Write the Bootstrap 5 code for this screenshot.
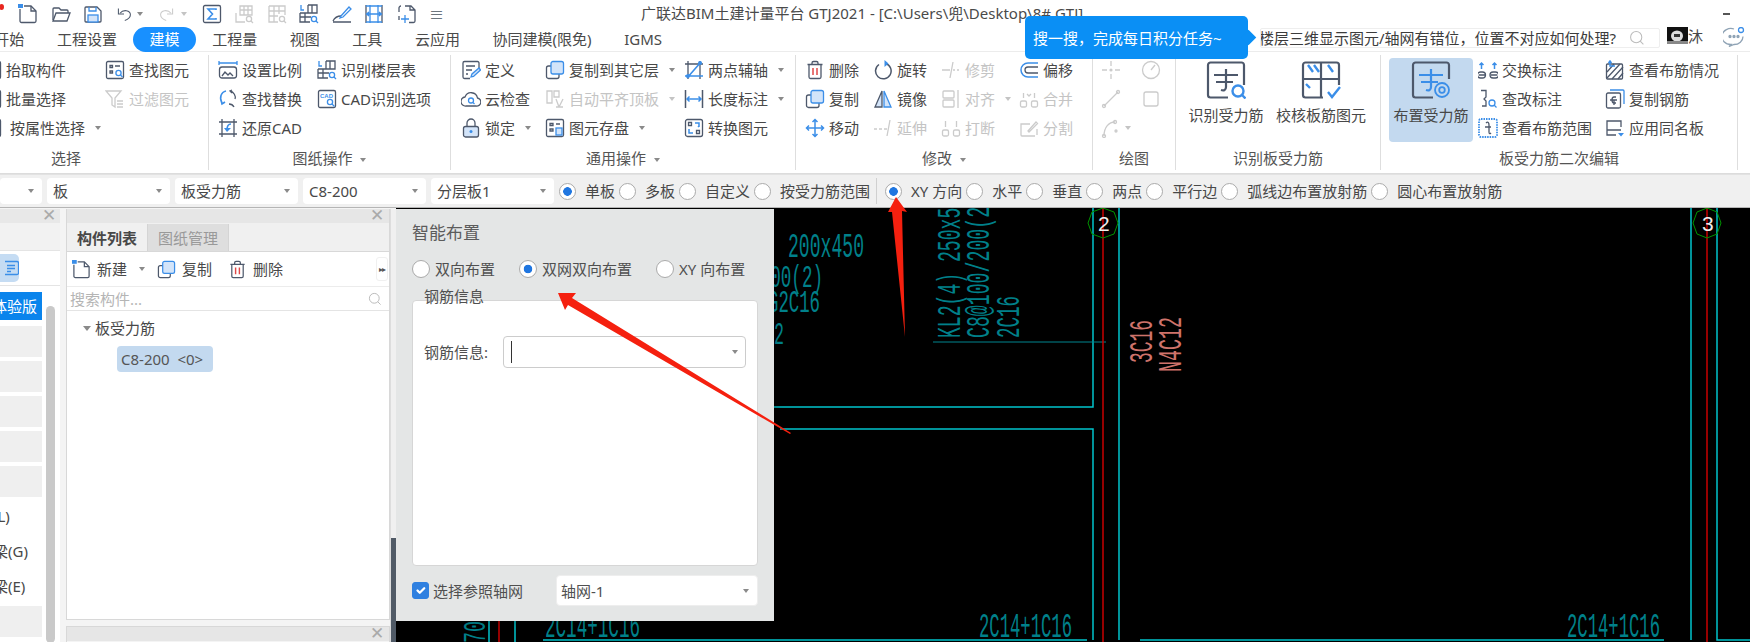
<!doctype html>
<html lang="zh-CN">
<head>
<meta charset="utf-8">
<title>GTJ2021</title>
<link rel="stylesheet" href="https://cdn.jsdelivr.net/npm/bootstrap@5.3.0/dist/css/bootstrap.min.css">
<style>
html,body{margin:0;height:642px;overflow:hidden}
body{width:1750px;position:relative;background:#fff;font-family:"Noto Sans","Noto Sans CJK SC",sans-serif;font-size:15px;line-height:1.2;color:#484848}
.ic{width:20px;height:20px;flex:none;fill:none;stroke:currentColor;stroke-width:1.3;color:#4d586b;--a:#3b8ee8;--f:#d3e4f9;overflow:hidden}
.ic.off{color:#cbcbcb;--a:#cbcbcb;--f:#f2f2f2}
.sa{stroke:var(--a)}.fla{fill:var(--a);stroke:none}.flf{fill:var(--f)}.wf{fill:#fff}
.crt{display:inline-block;flex:none;width:0;height:0;border:3.5px solid transparent;border-top:4px solid #8a8a8a;border-bottom:0}
.off-t{color:#c4c4c4}
/* title */
.ttl-bar{height:27px;padding-left:18px}
.qa{margin-right:12.500px}.qa-u{margin-right:5px;width:16px}.qa-c{margin-right:16px}.qa-r{margin-right:6px;width:16px}.qa-c2{margin-right:15px}
.ttl-txt{margin-left:197px;margin-bottom:2px;white-space:nowrap;color:#4a4a4a}
.red-dot{position:absolute;left:-1px;top:4px;width:5px;height:6px;border-radius:50%;background:#e8261f}
.min-d{width:7px;height:2px;background:#555;margin-right:20px}
/* tabs */
.tab-bar{height:24px;border-bottom:1px solid #ececec;box-sizing:content-box}
.tab-nav{margin-left:-22px;flex-wrap:nowrap}
.tab-nav .nav-link{height:25px;padding:0 16.300px;color:#4a4a4a;font-size:15px;line-height:24px;border-radius:13px;white-space:nowrap}
.tab-nav .nav-link.active{background:#1890ff;color:#fff}
.srch{width:400px;height:20px;margin-top:1px;border:1px solid #eee;border-radius:2px;overflow:hidden;color:#3c3c3c;white-space:nowrap;background:#fff}
.srch span{margin-left:-2px;flex:none;width:378px}
.srch .ic{margin-left:-8px;width:16px;height:16px;color:#bbb}
.usr{margin-left:7px;width:21px;height:17px}
.usr-n{width:20px;margin-right:15px}
.chat{width:22px;height:20px;margin-right:5px;color:#8fa3b5}
/* ribbon */
.ribbon{height:122px;border-bottom:1px solid #dcdcdc;overflow:hidden}
.rb-g{margin-top:3px;height:115px;border-right:1px solid #dedede;flex:none}
.rb-l{margin-top:auto;height:21px;color:#555;white-space:nowrap}
.rb-cols{display:grid;grid-auto-flow:column;grid-template-rows:repeat(3,28.7px);margin-top:1px}
.rb-i{white-space:nowrap;gap:4px}
.rb-i .crt{margin-left:6px}
.g1{width:209px}.g1 .rb-cols{margin-left:-18px;grid-template-columns:123px auto}.g1 .rb-l{padding-right:76px}
.g2{width:242px}.g2 .rb-cols{margin-left:9px;grid-template-columns:99px auto}
.g3{width:345px}.g3 .rb-cols{margin-left:10px;grid-template-columns:84px 139px auto}
.g4{width:297px}.g4 .rb-cols{margin-left:9px;grid-template-columns:68px 68px 78px auto}
.g5{width:83px}.g5 .rb-cols{margin-left:8px;grid-template-columns:40px auto}
.g6{width:205px}.g7{width:357px}
.g7 .rb-cols{margin-left:5px;grid-template-columns:127px auto}
.big-b{height:84px;margin-top:3px;padding-top:3px;white-space:nowrap;border-radius:4px;flex:none}
.big-b .ic{width:40px;height:38px;margin-bottom:7px}
.big-1{width:76px;margin-left:12px}.big-2{width:90px;margin-left:12px}
.big-3{width:84px;margin-left:8px;background:#c3d9ef}
/* options */
.opt-bar{height:34px;background:#f0f0f0;border-top:1px solid #e2e2e2;border-bottom:1px solid #b5b5b5;white-space:nowrap}
.opt-sel{height:26px;width:123px;margin-left:5px;padding:0 6px;background:#fff;border-radius:4px;flex:none}
.opt-sel .crt{margin-left:auto;margin-right:2px}
.opt-s0{width:42px;margin-left:0}
.opt-s1{margin-right:5px}
.opt-bar .form-check-input{margin:0 9px 0 0}
.opt-bar span+.form-check-input{margin-left:4px}
.form-check-input[type=radio]{width:17px;height:17px;flex:none;background-color:#fff;border:1px solid #aaa;background-image:none}
.form-check-input[type=radio]:checked{background-color:#fff;border-color:#aaa;background-image:radial-gradient(circle,#1f76e0 0 4px,transparent 4.600px)}
.opt-sep{width:1px;height:26px;background:#d0d0d0;margin:0 8px 0 6px}
/* main */
.main{height:435px;background:#f4f4f4;overflow:hidden}
.dk1{width:60px;flex:none;background:#fff;margin-top:1px;overflow:hidden}
.dk-x{color:#aaa;font-size:17px;line-height:14px;font-family:"Liberation Sans",sans-serif}
.dk1-hs{height:14px;background:#e8e8e8;padding-right:4px}
.dk1-h{height:28px;background:#f2f2f2;border-bottom:1px solid #e4e4e4}
.dk1-t{height:35px;border-bottom:1px solid #e4e4e4;padding-top:3px}
.dk1-b{width:19px;height:28px;background:#c5dcf3;border-radius:0 5px 5px 0}
.dk1-b svg{width:14px;height:16px;stroke:#3b8ee8;fill:none;stroke-width:1.300}
.dk1-l{padding-top:6px;gap:4px;width:42px;overflow:hidden}
.lst-r{height:31px;background:#efefef;flex:none;width:42px}
.lst-t{height:31px;flex:none;line-height:31px;padding-left:0;margin-left:-7px;white-space:nowrap}
.lst-a{height:28px;background:#0a84ec;color:#fff;line-height:28px;white-space:nowrap;text-indent:-8px;margin-bottom:2px;flex:none}
.sb{width:9px;background:#c9c9c9;border-radius:5px;margin:20px 0 0 4px}
.dk2{width:324px;flex:none;margin-left:6px;margin-top:1px}
.dk2-p{height:411px;background:#fff;border:1px solid #d8d8d8;border-top:0;flex:none}
.dk2-h{height:14px;background:#e6e6e6;padding-right:5px;flex:none}
.dk2-tb{height:29px;background:#f0f0f0;border-bottom:1px solid #d8d8d8;flex:none;padding-top:1px}
.tb-a,.tb-b{width:81px;font-weight:700;color:#484848;border-right:1px solid #d4d4d4}
.tb-b{font-weight:400;color:#999;background:#dedede;margin-bottom:0}
.dk2-tl{height:35px;padding-left:5px;border-bottom:1px solid #ececec;flex:none}
.dk2-tl .ic{width:19px;height:19px}
.tl-t{margin-left:6px}
.tl-m{margin-left:12px;margin-right:12px}
.tl-g{margin-right:16px}
.more{width:12px;height:24px;margin-left:auto;margin-right:1px;border:1px solid #f0f0f0;border-radius:3px;font-size:8px;letter-spacing:-1px;color:#555}
.dk2-s{height:24px;padding:0 3px;color:#b5b5b5;border-bottom:1px solid #e4e4e4;flex:none}
.dk2-s .ic{width:14px;height:14px;margin-left:auto;margin-right:4px;color:#b5b5b5}
.tr-1{margin:6px 0 0 16px;height:22px}
.tr-1 .crt{margin-right:4px;border-width:4px;border-top-width:5px}
.tr-2{margin:7px 0 0 50px;width:96px;height:26px;background:#c3d9ef;border-radius:4px;padding-left:4px;color:#555;white-space:nowrap}
.dk3{margin-top:6px;height:40px;border:1px solid #d8d8d8;flex:none}
.splt{width:6px;flex:none;background:#f0f0f0;border-left:1px solid #ddd;margin-top:1px}
.splt-d{margin-top:auto;height:105px;background:#505a66}
.cnv{flex:1 1 auto;background:#000;position:relative;overflow:hidden}
.cnv svg{display:block;width:1354px;height:435px}
.cnv text{font-family:"Liberation Mono",monospace;stroke:none}
.t1{fill:#00808a}.t2{fill:#cf736b}.t3{fill:#eee;font-family:"Liberation Sans",sans-serif !important}
/* floating */
.tip{position:absolute;left:1025px;top:16px;width:223px;height:43px;padding-left:8px;background:#0a8ff5;color:#fff;border-radius:5px;white-space:nowrap;z-index:5}
.tip::after{content:"";position:absolute;right:-6px;top:16px;width:11px;height:11px;background:#0a8ff5;transform:rotate(45deg)}
.dlg{position:absolute;left:0;top:1px;width:378px;height:412px;padding:12px 16px 0;background:#e4e6e6;box-shadow:0 0 8px rgba(0,0,0,.25);z-index:3;color:#505050}
.dlg-ttl{font-size:17px;height:24px;line-height:24px;color:#5c5c5c}
.dlg-r{margin-top:12px;height:24px;white-space:nowrap}
.dlg-r .form-check-input{width:18px;height:18px;margin:0 5px 0 0}
.dlg-r span{margin-right:24px}
.dlg-box{margin-top:19px;height:266px;background:#fff;border:1px solid #d6d6d6;border-radius:4px;padding:0 11px}
.dlg-lg{margin-top:-16px;height:22px;line-height:22px}
.dlg-f{margin-top:29px;white-space:nowrap}
.dlg-sel{height:32px;border:1px solid #ccc;border-radius:4px;background:#fff;padding:0 7px;flex:none}
.dlg-sel .crt{margin-left:auto}
.dlg-s1{width:243px;margin-left:auto}
.dlg-s2{width:202px;height:31px;margin-left:auto;border-color:#eee;padding:0 4px}
.dlg-b{margin-top:9px;height:31px}
.dlg-b .form-check-input{width:17px;height:17px;margin:0 4px 0 0;background-color:#2f80e0;border-color:#2f80e0;border-radius:3px}
.caret-l{width:1px;height:22px;background:#333;margin-right:0}
.arrows{position:absolute;left:0;top:0;width:1750px;height:642px;z-index:6;pointer-events:none}
</style>
</head>
<body>
<svg width="0" height="0" class="position-absolute">
<defs>
<symbol id="new" viewBox="0 0 20 20"><path d="M6 2h7l5 5v10a1.500 1.500 0 0 1-1.500 1.500h-13A1.500 1.500 0 0 1 2 17V5"/><path d="M13 2v5h5"/><rect class="fla" x="0" y="0" width="5" height="4"/></symbol>
<symbol id="open" viewBox="0 0 20 20"><path d="M2 16V5a1 1 0 0 1 1-1h5l2 2h6a1 1 0 0 1 1 1v2"/><path d="M2 17l3-8h14l-3 8z"/></symbol>
<symbol id="save" viewBox="0 0 20 20"><path d="M3 3h11l4 4v10a1 1 0 0 1-1 1H3a1 1 0 0 1-1-1V4a1 1 0 0 1 1-1z"/><path class="sa" d="M6 3v4h7V3"/><rect class="sa flf" x="5" y="11" width="10" height="7"/></symbol>
<symbol id="undo" viewBox="0 0 20 20"><path d="M5 9c4-5 13-4 13 2 0 4-4 6-7 7"/><path d="M3 3v7h7"/></symbol>
<symbol id="redo" viewBox="0 0 20 20"><path d="M15 9c-4-5-13-4-13 2 0 4 4 6 7 7"/><path d="M17 3v7h-7"/></symbol>
<symbol id="sig" viewBox="0 0 20 20"><rect x="1.500" y="1.500" width="17" height="17" rx="1.500"/><path class="sa" stroke-width="1.600" d="M14 6V5H6l4.500 5L6 15h8v-1"/></symbol>
<symbol id="tmag" viewBox="0 0 20 20"><path d="M6 2h12v9H6zM10 2v9M14 2v9M6 6h12M2 9v9h9"/><circle cx="15" cy="15" r="2.600"/><path d="M17 17l2 2"/></symbol>
<symbol id="gmag" viewBox="0 0 20 20"><path d="M2 2h16v9M2 2v16h9M7 2v16M12 2v8M2 7h16M2 12h9"/><circle cx="15" cy="15" r="2.600"/><path d="M17 17l2 2"/></symbol>
<symbol id="flr" viewBox="0 0 20 20"><path class="sa" d="M2 1v5h3"/><path d="M9 1h9v8H1M9 1v8M13 1v8M1 9v9h10M6 9v9M1 13h11"/><circle class="sa" cx="15" cy="15" r="2.600"/><path class="sa" d="M17 17l2 2"/></symbol>
<symbol id="pen" viewBox="0 0 20 20"><path d="M1 17c2-4 5-5 8-5M1 18h18"/><path class="sa" d="M9 12l8-9 2 2-8 8-3 1z"/></symbol>
<symbol id="frm" viewBox="0 0 20 20"><path d="M2 1v18M18 1v18"/><path class="sa" stroke-width="1.600" d="M2 2h16M2 18h16M2 10h16M5 8l-2 2 2 2M15 8l2 2-2 2"/><path class="sa" d="M6 1v18M14 1v18"/></symbol>
<symbol id="scan" viewBox="0 0 20 20"><path d="M8 2h6l4 4v11a1.500 1.500 0 0 1-1.500 1.500H12M2 8v-4a2 2 0 0 1 2-2M2 12v4M13 2v4h5"/><path class="sa" d="M8 11v8M4 15h8"/></symbol>
<symbol id="find" viewBox="0 0 20 20"><rect x="1.500" y="1.500" width="17" height="17" rx="1.500"/><path d="M5 5.500h2.500v2H5zM10 6h5M5 11h2.500v2H5z"/><circle class="sa" cx="13.500" cy="13" r="2.600"/><path class="sa" d="M15.500 15l2 2"/></symbol>
<symbol id="filt" viewBox="0 0 20 20"><path d="M1 2h15l-6 7v9l-3-2V9z"/><path d="M12 12h6M12 15h6M12 18h6"/></symbol>
<symbol id="rat" viewBox="0 0 20 20"><path class="sa" d="M1 1v4M19 1v4M1 3h18"/><rect x="1.500" y="7" width="17" height="11" rx="2.500"/><path d="M4 16l3-4 3 3 2-2 3 3"/></symbol>
<symbol id="rep" viewBox="0 0 20 20"><path class="sa" stroke-width="1.600" d="M8 2C3 3 1 9 4 14M3 11l1 4 3-2"/><path d="M12 2c4 1 6 5 5 8M16 18c-1-2-3-3-5-3M14 4l-2-2 2-1"/></symbol>
<symbol id="cad" viewBox="0 0 20 20"><rect x="1.500" y="1.500" width="17" height="17" rx="1.500"/><text x="3" y="8.500" font-size="6" font-weight="700" stroke="none" fill="#3b8ee8" font-family="Liberation Sans">CAD</text><circle class="sa" cx="13" cy="13" r="2.600"/><path class="sa" d="M15 15l2.500 2.500"/></symbol>
<symbol id="rest" viewBox="0 0 20 20"><path d="M1 4h18M1 16h18M4 1v18M16 1v18"/><path class="sa" stroke-width="1.600" d="M13 6c-3 0-4 3-4 6"/><path class="fla" d="M9 14l-3-4h7z"/></symbol>
<symbol id="def" viewBox="0 0 20 20"><path d="M18 8V3a1.500 1.500 0 0 0-1.500-1.500h-13A1.500 1.500 0 0 0 2 3v14a1.500 1.500 0 0 0 1.500 1.500H9M5 6h9M5 10h6M5 14h2"/><path class="sa flf" d="M10 17l1-3 7-6 1.500 2-7 6.500z"/></symbol>
<symbol id="cld" viewBox="0 0 20 20"><path d="M5 17a4.500 4.500 0 0 1-1-9 6.500 6.500 0 0 1 12.500 1 4 4 0 0 1-1.500 8z"/><circle class="sa" cx="10" cy="11.500" r="2.500"/><path class="sa" d="M12 13.500l1.500 1.500"/></symbol>
<symbol id="lck" viewBox="0 0 20 20"><rect class="flf" x="2.500" y="8.500" width="15" height="10.500" rx="2"/><path d="M6 8.500V5a4 4 0 0 1 8 0v3.500"/><circle class="fla" cx="10" cy="13.500" r="1.500"/></symbol>
<symbol id="cpy" viewBox="0 0 20 20"><rect x="1.500" y="6" width="12.500" height="12.500" rx="2"/><rect class="sa flf" x="6" y="1.500" width="12.500" height="12.500" rx="2"/></symbol>
<symbol id="atop" viewBox="0 0 20 20"><path d="M2 2h5v12H2zM9 2h5v6H9zM14 18l-3-8M14 18l4-8M11 18h7"/></symbol>
<symbol id="sto" viewBox="0 0 20 20"><rect x="1.500" y="1.500" width="17" height="17" rx="1.500"/><path d="M5 5.500h3v2H5zM11 6h4M5 11h3v2H5z"/><rect class="sa flf" x="11" y="10" width="6" height="7"/></symbol>
<symbol id="two" viewBox="0 0 20 20"><path d="M4 1v18M16 1v18M1 4h18"/><path class="sa" stroke-width="1.600" d="M3 18L17 2M1 16h18"/><circle class="fla" cx="4" cy="16" r="2"/><circle class="fla" cx="16" cy="3" r="2"/></symbol>
<symbol id="dim" viewBox="0 0 20 20"><path stroke-width="1.500" d="M1.500 1v18M18.500 1v18"/><path class="sa" stroke-width="1.500" d="M3 10h14M5.500 7.500L3 10l2.500 2.500M14.500 7.500L17 10l-2.500 2.500"/></symbol>
<symbol id="cvt" viewBox="0 0 20 20"><rect x="1.500" y="1.500" width="17" height="17" rx="2"/><path d="M4.500 4.500h3v3h-3zM12.500 12.500h3v3h-3z"/><path class="sa" stroke-width="1.500" d="M11 5h4v4M14 9l1-1M9 15H5v-4"/></symbol>
<symbol id="del" viewBox="0 0 20 20"><path d="M4 5v12a1.500 1.500 0 0 0 1.500 1.500h9A1.500 1.500 0 0 0 16 17V5M2.500 4.500h15M7 4.500V3a1.500 1.500 0 0 1 1.500-1.500h3A1.500 1.500 0 0 1 13 3v1.500"/><path stroke="#e04848" stroke-width="1.500" d="M8 8v7M12 8v7"/></symbol>
<symbol id="rot" viewBox="0 0 20 20"><path stroke-width="1.500" d="M12.500 3.500a7.800 7.800 0 1 1-6.500 1"/><path class="fla" d="M11.500 0v7l4-3.500z"/></symbol>
<symbol id="trm" viewBox="0 0 20 20"><path d="M1 10h8M12 10h2M16 10h2M12 2l-3 16"/></symbol>
<symbol id="ofs" viewBox="0 0 20 20"><path class="sa" stroke-width="1.500" d="M19 3H9a7 7 0 0 0 0 14h10"/><path d="M19 7H9a3 3 0 0 0 0 6h10"/></symbol>
<symbol id="mir" viewBox="0 0 20 20"><path class="flf" d="M9 2L2 18h7z"/><path class="sa flf" d="M11 2l7 16h-7z"/></symbol>
<symbol id="aln" viewBox="0 0 20 20"><rect x="2" y="2" width="11" height="7" rx="1"/><rect x="2" y="11" width="11" height="7" rx="1"/><path d="M17 1v18"/></symbol>
<symbol id="mrg" viewBox="0 0 20 20"><rect x="1.500" y="12" width="6" height="6" rx="1.500"/><rect x="12.500" y="12" width="6" height="6" rx="1.500"/><path d="M4.500 4v5M15.500 4v5M8 5l2 2 2-2"/></symbol>
<symbol id="mov" viewBox="0 0 20 20"><path class="sa" stroke-width="1.500" d="M10 2v16M2 10h16M7.500 4L10 1.500 12.500 4M7.500 16l2.500 2.500 2.500-2.500M4 7.500L1.500 10 4 12.500M16 7.500l2.500 2.500-2.500 2.500"/></symbol>
<symbol id="ext" viewBox="0 0 20 20"><path d="M1 11h3M6 11h3M11 11h3M17 2l-3 16"/></symbol>
<symbol id="brk" viewBox="0 0 20 20"><rect x="1.500" y="12" width="6" height="6" rx="1.500"/><rect x="12.500" y="12" width="6" height="6" rx="1.500"/><path d="M4.500 3v6M15.500 3v6"/></symbol>
<symbol id="spl" viewBox="0 0 20 20"><path d="M16 18H3a1 1 0 0 1-1-1V6h9M18 11v6M9 13l8-9 1.500 1.500L10 14z"/></symbol>
<symbol id="pnt" viewBox="0 0 20 20"><path d="M1 10h5M14 10h5M10 1v5M10 14v5"/><circle class="fla" cx="10" cy="10" r="1.600"/></symbol>
<symbol id="cir" viewBox="0 0 20 20"><circle cx="10" cy="10" r="8.500"/><path d="M10 10l4-5"/></symbol>
<symbol id="lin" viewBox="0 0 20 20"><path d="M3 17L17 3"/><circle cx="3" cy="17" r="1.500"/><circle cx="17" cy="3" r="1.500"/></symbol>
<symbol id="rct" viewBox="0 0 20 20"><rect x="3" y="3" width="14" height="14" rx="2"/></symbol>
<symbol id="arc" viewBox="0 0 20 20"><path d="M3 18C3 9 8 4 14 4"/><circle cx="14" cy="4" r="1.500"/><circle cx="3" cy="18" r="1.500"/><circle cx="15" cy="13" r="1"/></symbol>
<symbol id="bid" viewBox="0 0 40 38"><path stroke-width="2.200" d="M38 24V4a2.500 2.500 0 0 0-2.500-2.500h-31A2.500 2.500 0 0 0 2 4v30a2.500 2.500 0 0 0 2.500 2.500H22"/><path stroke-width="2.200" d="M8 14h24M10 21h17M20 8v18c0 3-2 4-5 3"/><circle class="sa" stroke-width="2.400" cx="32" cy="30" r="5.500"/><path class="sa" stroke-width="2.400" d="M36 34l3.500 3.500"/></symbol>
<symbol id="bck" viewBox="0 0 40 38"><path stroke-width="2.200" d="M22 36.500H4.500A2.500 2.500 0 0 1 2 34V4a2.500 2.500 0 0 1 2.500-2.500h31A2.500 2.500 0 0 1 38 4v20M20 1.500V36M2 18h36"/><path class="sa" stroke-width="2.400" d="M7 4l5 7M13 4l5 7M27 4l5 7M5 23l4 4M27 31l4 5 8-10"/></symbol>
<symbol id="bpl" viewBox="0 0 40 38"><path stroke-width="2.200" d="M38 18V4a2.500 2.500 0 0 0-2.500-2.500h-31A2.500 2.500 0 0 0 2 4v30a2.500 2.500 0 0 0 2.500 2.500H22"/><path class="sa" stroke-width="2.200" d="M8 14h24M10 21h17M20 8v18c0 3-2 4-5 3"/><circle class="sa" stroke-width="1.800" cx="31" cy="29" r="7"/><circle class="sa" stroke-width="1.800" cx="31" cy="29" r="2.800"/></symbol>
<symbol id="swp" viewBox="0 0 20 20"><path d="M3.500 12h-1a1.500 1.500 0 0 0 0 6h2a1.500 1.500 0 0 0 0-6zM15 12h2.500a1.500 1.500 0 0 1 0 6H15a1.500 1.500 0 0 1 0-6zM1 15h6M13 15h6"/><path class="sa" stroke-width="1.500" d="M3.500 9V3M1.500 5l2-2 2 2M16.500 9V3M14.500 5l2-2 2 2"/></symbol>
<symbol id="edl" viewBox="0 0 20 20"><path d="M3 1.500h5V8L6 10l2 2v5H4"/><circle class="sa" cx="14" cy="14" r="3"/><path class="sa" d="M16 16l2.500 2.500"/></symbol>
<symbol id="rng" viewBox="0 0 20 20"><rect class="sa" stroke-dasharray="1.500 1" stroke-width="1.800" x="1" y="1" width="18" height="18" rx="2"/><path d="M8 5c2-2 3 0 3 2v7c0 2 1 2 2 1M7 9h6"/></symbol>
<symbol id="vew" viewBox="0 0 20 20"><rect x="1.500" y="4" width="16" height="15" rx="1"/><path d="M2 12l7-8M2 18l13-14M7 19l11-12M13 19l5-6"/><path class="sa" stroke-width="1.500" d="M5 1v5h5M3.500 3L5 1l1.500 2"/></symbol>
<symbol id="cpr" viewBox="0 0 20 20"><rect x="1.500" y="4" width="14" height="15" rx="1.500"/><path class="sa" d="M5 1h13a1 1 0 0 1 1 1v13"/><path d="M11 8H9c-2 0-2 2-2 3s0 3 2 3h2M5 11h7M9 11v5"/></symbol>
<symbol id="apl" viewBox="0 0 20 20"><path d="M16 9V3H2v14h9M2 12h14"/><path class="fla" d="M13 15h6l-3 3.500z"/></symbol>
<symbol id="mag" viewBox="0 0 20 20"><circle cx="9" cy="9" r="7"/><path d="M14 14l4 4"/></symbol>
</defs>
</svg>

<!-- title bar -->
<div class="ttl-bar d-flex align-items-center position-relative">
<i class="red-dot"></i>
<svg class="ic qa"><use href="#new"/></svg>
<svg class="ic qa"><use href="#open"/></svg>
<svg class="ic qa"><use href="#save"/></svg>
<svg class="ic qa-u"><use href="#undo"/></svg><i class="crt qa-c"></i>
<svg class="ic qa-r off"><use href="#redo"/></svg><i class="crt qa-c2 opacity-50"></i>
<svg class="ic qa"><use href="#sig"/></svg>
<svg class="ic qa off"><use href="#tmag"/></svg>
<svg class="ic qa off"><use href="#gmag"/></svg>
<svg class="ic qa"><use href="#flr"/></svg>
<svg class="ic qa"><use href="#pen"/></svg>
<svg class="ic qa"><use href="#frm"/></svg>
<svg class="ic qa"><use href="#scan"/></svg>
<span class="text-secondary">&#8801;</span>
<span class="ttl-txt">广联达BIM土建计量平台 GTJ2021 - [C:\Users\兜\Desktop\8# GTJ]</span>
<i class="min-d ms-auto"></i>
</div>

<!-- tabs -->
<div class="tab-bar d-flex">
<ul class="nav tab-nav">
<li class="nav-item"><a class="nav-link" href="#">开始</a></li>
<li class="nav-item"><a class="nav-link" href="#">工程设置</a></li>
<li class="nav-item"><a class="nav-link active" href="#">建模</a></li>
<li class="nav-item"><a class="nav-link" href="#">工程量</a></li>
<li class="nav-item"><a class="nav-link" href="#">视图</a></li>
<li class="nav-item"><a class="nav-link" href="#">工具</a></li>
<li class="nav-item"><a class="nav-link" href="#">云应用</a></li>
<li class="nav-item"><a class="nav-link" href="#">协同建模(限免)</a></li>
<li class="nav-item"><a class="nav-link" href="#">IGMS</a></li>
</ul>
<div class="srch d-flex align-items-center ms-auto"><span>楼层三维显示图元/轴网有错位，位置不对应如何处理?</span><svg class="ic"><use href="#mag"/></svg></div>
<svg class="usr" viewBox="0 0 21 17"><rect width="21" height="17" fill="#111"/><ellipse cx="10" cy="9" rx="6" ry="5.500" fill="#ddd"/><rect x="7" y="7" width="6" height="3" fill="#333"/><rect y="14" width="21" height="3" fill="#888"/></svg>
<span class="usr-n">沐</span>
<svg class="chat ic" viewBox="0 0 22 20"><path d="M11 2a9 8 0 1 0-3 15.500L6 19.500l5-2a9 8 0 0 0 9-8"/><circle cx="7" cy="9.500" r="1" fill="currentColor"/><circle cx="11" cy="9.500" r="1" fill="currentColor"/><circle cx="15" cy="9.500" r="1" fill="currentColor"/><circle cx="18" cy="3" r="2.500" fill="#fff" stroke="#3b8ee8"/></svg>
</div>

<!-- ribbon -->
<div class="ribbon d-flex">
<section class="rb-g g1 d-flex flex-column">
<div class="rb-cols">
<div class="rb-i d-flex align-items-center"><svg class="ic"><use href="#find"/></svg>抬取构件</div>
<div class="rb-i d-flex align-items-center"><svg class="ic"><use href="#find"/></svg>批量选择</div>
<div class="rb-i d-flex align-items-center"><svg class="ic"><use href="#find"/></svg><span class="ms-1">按属性选择</span><i class="crt"></i></div>
<div class="rb-i d-flex align-items-center"><svg class="ic"><use href="#find"/></svg>查找图元</div>
<div class="rb-i d-flex align-items-center off-t"><svg class="ic off"><use href="#filt"/></svg>过滤图元</div>
</div>
<div class="rb-l text-center">选择</div>
</section>
<section class="rb-g g2 d-flex flex-column">
<div class="rb-cols">
<div class="rb-i d-flex align-items-center"><svg class="ic"><use href="#rat"/></svg>设置比例</div>
<div class="rb-i d-flex align-items-center"><svg class="ic"><use href="#rep"/></svg>查找替换</div>
<div class="rb-i d-flex align-items-center"><svg class="ic"><use href="#rest"/></svg>还原CAD</div>
<div class="rb-i d-flex align-items-center"><svg class="ic"><use href="#flr"/></svg>识别楼层表</div>
<div class="rb-i d-flex align-items-center"><svg class="ic"><use href="#cad"/></svg>CAD识别选项</div>
</div>
<div class="rb-l text-center">图纸操作 <i class="crt ms-1 align-middle"></i></div>
</section>
<section class="rb-g g3 d-flex flex-column">
<div class="rb-cols">
<div class="rb-i d-flex align-items-center"><svg class="ic"><use href="#def"/></svg>定义</div>
<div class="rb-i d-flex align-items-center"><svg class="ic"><use href="#cld"/></svg>云检查</div>
<div class="rb-i d-flex align-items-center"><svg class="ic"><use href="#lck"/></svg>锁定<i class="crt"></i></div>
<div class="rb-i d-flex align-items-center"><svg class="ic"><use href="#cpy"/></svg>复制到其它层<i class="crt"></i></div>
<div class="rb-i d-flex align-items-center off-t"><svg class="ic off"><use href="#atop"/></svg>自动平齐顶板<i class="crt opacity-50"></i></div>
<div class="rb-i d-flex align-items-center"><svg class="ic"><use href="#sto"/></svg>图元存盘<i class="crt"></i></div>
<div class="rb-i d-flex align-items-center"><svg class="ic"><use href="#two"/></svg>两点辅轴<i class="crt"></i></div>
<div class="rb-i d-flex align-items-center"><svg class="ic"><use href="#dim"/></svg>长度标注<i class="crt"></i></div>
<div class="rb-i d-flex align-items-center"><svg class="ic"><use href="#cvt"/></svg>转换图元</div>
</div>
<div class="rb-l text-center">通用操作 <i class="crt ms-1 align-middle"></i></div>
</section>
<section class="rb-g g4 d-flex flex-column">
<div class="rb-cols">
<div class="rb-i d-flex align-items-center"><svg class="ic"><use href="#del"/></svg>删除</div>
<div class="rb-i d-flex align-items-center"><svg class="ic"><use href="#cpy"/></svg>复制</div>
<div class="rb-i d-flex align-items-center"><svg class="ic"><use href="#mov"/></svg>移动</div>
<div class="rb-i d-flex align-items-center"><svg class="ic"><use href="#rot"/></svg>旋转</div>
<div class="rb-i d-flex align-items-center"><svg class="ic"><use href="#mir"/></svg>镜像</div>
<div class="rb-i d-flex align-items-center off-t"><svg class="ic off"><use href="#ext"/></svg>延伸</div>
<div class="rb-i d-flex align-items-center off-t"><svg class="ic off"><use href="#trm"/></svg>修剪</div>
<div class="rb-i d-flex align-items-center off-t"><svg class="ic off"><use href="#aln"/></svg>对齐<i class="crt opacity-50"></i></div>
<div class="rb-i d-flex align-items-center off-t"><svg class="ic off"><use href="#brk"/></svg>打断</div>
<div class="rb-i d-flex align-items-center"><svg class="ic"><use href="#ofs"/></svg>偏移</div>
<div class="rb-i d-flex align-items-center off-t"><svg class="ic off"><use href="#mrg"/></svg>合并</div>
<div class="rb-i d-flex align-items-center off-t"><svg class="ic off"><use href="#spl"/></svg>分割</div>
</div>
<div class="rb-l text-center">修改 <i class="crt ms-1 align-middle"></i></div>
</section>
<section class="rb-g g5 d-flex flex-column">
<div class="rb-cols">
<div class="d-flex align-items-center"><svg class="ic off"><use href="#pnt"/></svg></div>
<div class="d-flex align-items-center"><svg class="ic off"><use href="#lin"/></svg></div>
<div class="rb-i d-flex align-items-center"><svg class="ic off"><use href="#arc"/></svg><i class="crt opacity-50 ms-0"></i></div>
<div class="d-flex align-items-center"><svg class="ic off"><use href="#cir"/></svg></div>
<div class="d-flex align-items-center"><svg class="ic off"><use href="#rct"/></svg></div>
</div>
<div class="rb-l text-center">绘图</div>
</section>
<section class="rb-g g6 d-flex flex-column">
<div class="d-flex">
<div class="big-b big-1 d-flex flex-column align-items-center"><svg class="ic"><use href="#bid"/></svg>识别受力筋</div>
<div class="big-b big-2 d-flex flex-column align-items-center"><svg class="ic"><use href="#bck"/></svg>校核板筋图元</div>
</div>
<div class="rb-l text-center">识别板受力筋</div>
</section>
<section class="rb-g g7 d-flex flex-column">
<div class="d-flex">
<div class="big-b big-3 d-flex flex-column align-items-center"><svg class="ic"><use href="#bpl"/></svg>布置受力筋</div>
<div class="rb-cols">
<div class="rb-i d-flex align-items-center"><svg class="ic"><use href="#swp"/></svg>交换标注</div>
<div class="rb-i d-flex align-items-center"><svg class="ic"><use href="#edl"/></svg>查改标注</div>
<div class="rb-i d-flex align-items-center"><svg class="ic"><use href="#rng"/></svg>查看布筋范围</div>
<div class="rb-i d-flex align-items-center"><svg class="ic"><use href="#vew"/></svg>查看布筋情况</div>
<div class="rb-i d-flex align-items-center"><svg class="ic"><use href="#cpr"/></svg>复制钢筋</div>
<div class="rb-i d-flex align-items-center"><svg class="ic"><use href="#apl"/></svg>应用同名板</div>
</div>
</div>
<div class="rb-l text-center">板受力筋二次编辑</div>
</section>
</div>

<!-- options -->
<div class="opt-bar d-flex align-items-center">
<div class="opt-sel opt-s0 d-flex align-items-center"><i class="crt"></i></div>
<div class="opt-sel d-flex align-items-center">板<i class="crt"></i></div>
<div class="opt-sel d-flex align-items-center">板受力筋<i class="crt"></i></div>
<div class="opt-sel d-flex align-items-center">C8-200<i class="crt"></i></div>
<div class="opt-sel opt-s1 d-flex align-items-center">分层板1<i class="crt"></i></div>
<input class="form-check-input" type="radio" name="a" checked><span>单板</span>
<input class="form-check-input" type="radio" name="a"><span>多板</span>
<input class="form-check-input" type="radio" name="a"><span>自定义</span>
<input class="form-check-input" type="radio" name="a"><span>按受力筋范围</span>
<i class="opt-sep"></i>
<input class="form-check-input" type="radio" name="b" checked><span>XY 方向</span>
<input class="form-check-input" type="radio" name="b"><span>水平</span>
<input class="form-check-input" type="radio" name="b"><span>垂直</span>
<input class="form-check-input" type="radio" name="b"><span>两点</span>
<input class="form-check-input" type="radio" name="b"><span>平行边</span>
<input class="form-check-input" type="radio" name="b"><span>弧线边布置放射筋</span>
<input class="form-check-input" type="radio" name="b"><span>圆心布置放射筋</span>
</div>

<!-- main -->
<div class="main d-flex">
<aside class="dk1 d-flex flex-column">
<div class="dk1-hs d-flex justify-content-end flex-shrink-0"><span class="dk-x">&#10005;</span></div>
<div class="dk1-h flex-shrink-0"></div>
<div class="dk1-t flex-shrink-0"><div class="dk1-b d-flex align-items-center justify-content-end"><svg viewBox="0 0 14 16"><path d="M-4 1.500h16a1.500 1.500 0 0 1 1.500 1.500v10a1.500 1.500 0 0 1-1.500 1.500h-16M2 5.500h8M2 8.500h8M2 11.500h4"/></svg></div></div>
<div class="d-flex flex-grow-1">
<div class="dk1-l d-flex flex-column">
<div class="lst-a">体验版</div>
<div class="lst-r"></div><div class="lst-r"></div><div class="lst-r"></div><div class="lst-r"></div><div class="lst-r"></div>
<div class="lst-t">(L)</div><div class="lst-t">梁(G)</div><div class="lst-t">梁(E)</div>
<div class="lst-r"></div>
</div>
<div class="sb flex-shrink-0"></div>
</div>
</aside>
<aside class="dk2 d-flex flex-column">
<div class="dk2-p d-flex flex-column">
<div class="dk2-h d-flex justify-content-end"><span class="dk-x">&#10005;</span></div>
<div class="dk2-tb d-flex"><div class="tb-a d-flex align-items-center justify-content-center">构件列表</div><div class="tb-b d-flex align-items-center justify-content-center">图纸管理</div></div>
<div class="dk2-tl d-flex align-items-center">
<svg class="ic"><use href="#new"/></svg><span class="tl-t">新建</span><i class="crt tl-m"></i>
<svg class="ic"><use href="#cpy"/></svg><span class="tl-t tl-g">复制</span>
<svg class="ic"><use href="#del"/></svg><span class="tl-t">删除</span>
<div class="more d-flex align-items-center justify-content-center">&#9656;&#9656;</div>
</div>
<div class="dk2-s d-flex align-items-center">搜索构件...<svg class="ic"><use href="#mag"/></svg></div>
<div class="tr-1 d-flex align-items-center"><i class="crt"></i>板受力筋</div>
<div class="tr-2 d-flex align-items-center">C8-200&nbsp;&nbsp;&lt;0&gt;</div>
</div>
<div class="dk3"><div class="dk2-h d-flex justify-content-end"><span class="dk-x">&#10005;</span></div></div>
</aside>
<div class="splt d-flex flex-column"><div class="splt-d"></div></div>
<div class="cnv">
<svg viewBox="396 207 1354 435" fill="none">
<g stroke="#00c4cc" stroke-width="1.500">
<path d="M396 406H1093V207M780 428H1093V639M1119 207V639M489 620V642M515 620V642"/>
<path d="M543 639H1087M1140 639H1664M1691 207V639M1717 207V639H1750"/>
</g>
<path d="M933 341H1106" stroke="#00858f"/>
<path d="M1103 207V642M1707 207V642M499 620V642" stroke="#c80000" stroke-width="1.500"/>
<path d="M1103 207l11 4 4 11-4 11-11 4-11-4-4-11 4-11zM1707 207l10 4 4 11-4 11-10 4-10-4-4-11 4-11z" stroke="#009400"/>
<text class="t3" x="1098" y="230" font-size="21">2</text>
<text class="t3" x="1702" y="230" font-size="21">3</text>
<text class="t1" font-size="35" x="788" y="256" textLength="76" lengthAdjust="spacingAndGlyphs">200x450</text>
<text class="t1" font-size="32" x="728" y="286" textLength="95" lengthAdjust="spacingAndGlyphs">C8@100(2)</text>
<text class="t1" font-size="32" x="768" y="311" textLength="52" lengthAdjust="spacingAndGlyphs">G2C16</text>
<text class="t1" font-size="32" x="774" y="343" textLength="10" lengthAdjust="spacingAndGlyphs">2</text>
<text class="t1" font-size="34" transform="translate(960 337) rotate(-90)" textLength="152" lengthAdjust="spacingAndGlyphs">KL2(4) 250x500</text>
<text class="t1" font-size="34" transform="translate(989 337) rotate(-90)" textLength="142" lengthAdjust="spacingAndGlyphs">C8@100/200(2)</text>
<text class="t1" font-size="34" transform="translate(1019 337) rotate(-90)" textLength="42" lengthAdjust="spacingAndGlyphs">2C16</text>
<text class="t2" font-size="34" transform="translate(1152 362) rotate(-90)" textLength="43" lengthAdjust="spacingAndGlyphs">3C16</text>
<text class="t2" font-size="34" transform="translate(1181 371) rotate(-90)" textLength="55" lengthAdjust="spacingAndGlyphs">N4C12</text>
<text class="t1" font-size="35" x="979" y="636" textLength="93" lengthAdjust="spacingAndGlyphs">2C14+1C16</text>
<text class="t1" font-size="35" x="1567" y="636" textLength="93" lengthAdjust="spacingAndGlyphs">2C14+1C16</text>
<text class="t1" font-size="35" x="545" y="636" textLength="95" lengthAdjust="spacingAndGlyphs">2C14+1C16</text>
<text class="t1" font-size="32" transform="translate(485 642) rotate(-90)" textLength="22" lengthAdjust="spacingAndGlyphs">70</text>
</svg>
<div class="dlg">
<div class="dlg-ttl">智能布置</div>
<div class="dlg-r d-flex align-items-center">
<input class="form-check-input" type="radio" name="c"><span>双向布置</span>
<input class="form-check-input" type="radio" name="c" checked><span>双网双向布置</span>
<input class="form-check-input" type="radio" name="c"><span>XY 向布置</span>
</div>
<div class="dlg-box">
<div class="dlg-lg">钢筋信息</div>
<div class="dlg-f d-flex align-items-center">钢筋信息:<div class="dlg-sel dlg-s1 d-flex align-items-center"><i class="caret-l"></i><i class="crt"></i></div></div>
</div>
<div class="dlg-b d-flex align-items-center">
<input class="form-check-input" type="checkbox" checked><span>选择参照轴网</span>
<div class="dlg-sel dlg-s2 d-flex align-items-center">轴网-1<i class="crt me-1"></i></div>
</div>
</div>
</div>
</div>

<div class="tip d-flex align-items-center">搜一搜，完成每日积分任务~</div>
<svg class="arrows" viewBox="0 0 1750 642">
<path fill="#f5200f" d="M896 197L907 212 902 211 905 337 892 212 888 212z"/>
<path fill="#f5200f" d="M558 293L576 293 572 298 791 433 790 434 568 305 565 310z"/>
</svg>
<script src="https://cdn.jsdelivr.net/npm/bootstrap@5.3.0/dist/js/bootstrap.bundle.min.js"></script>
</body>
</html>
